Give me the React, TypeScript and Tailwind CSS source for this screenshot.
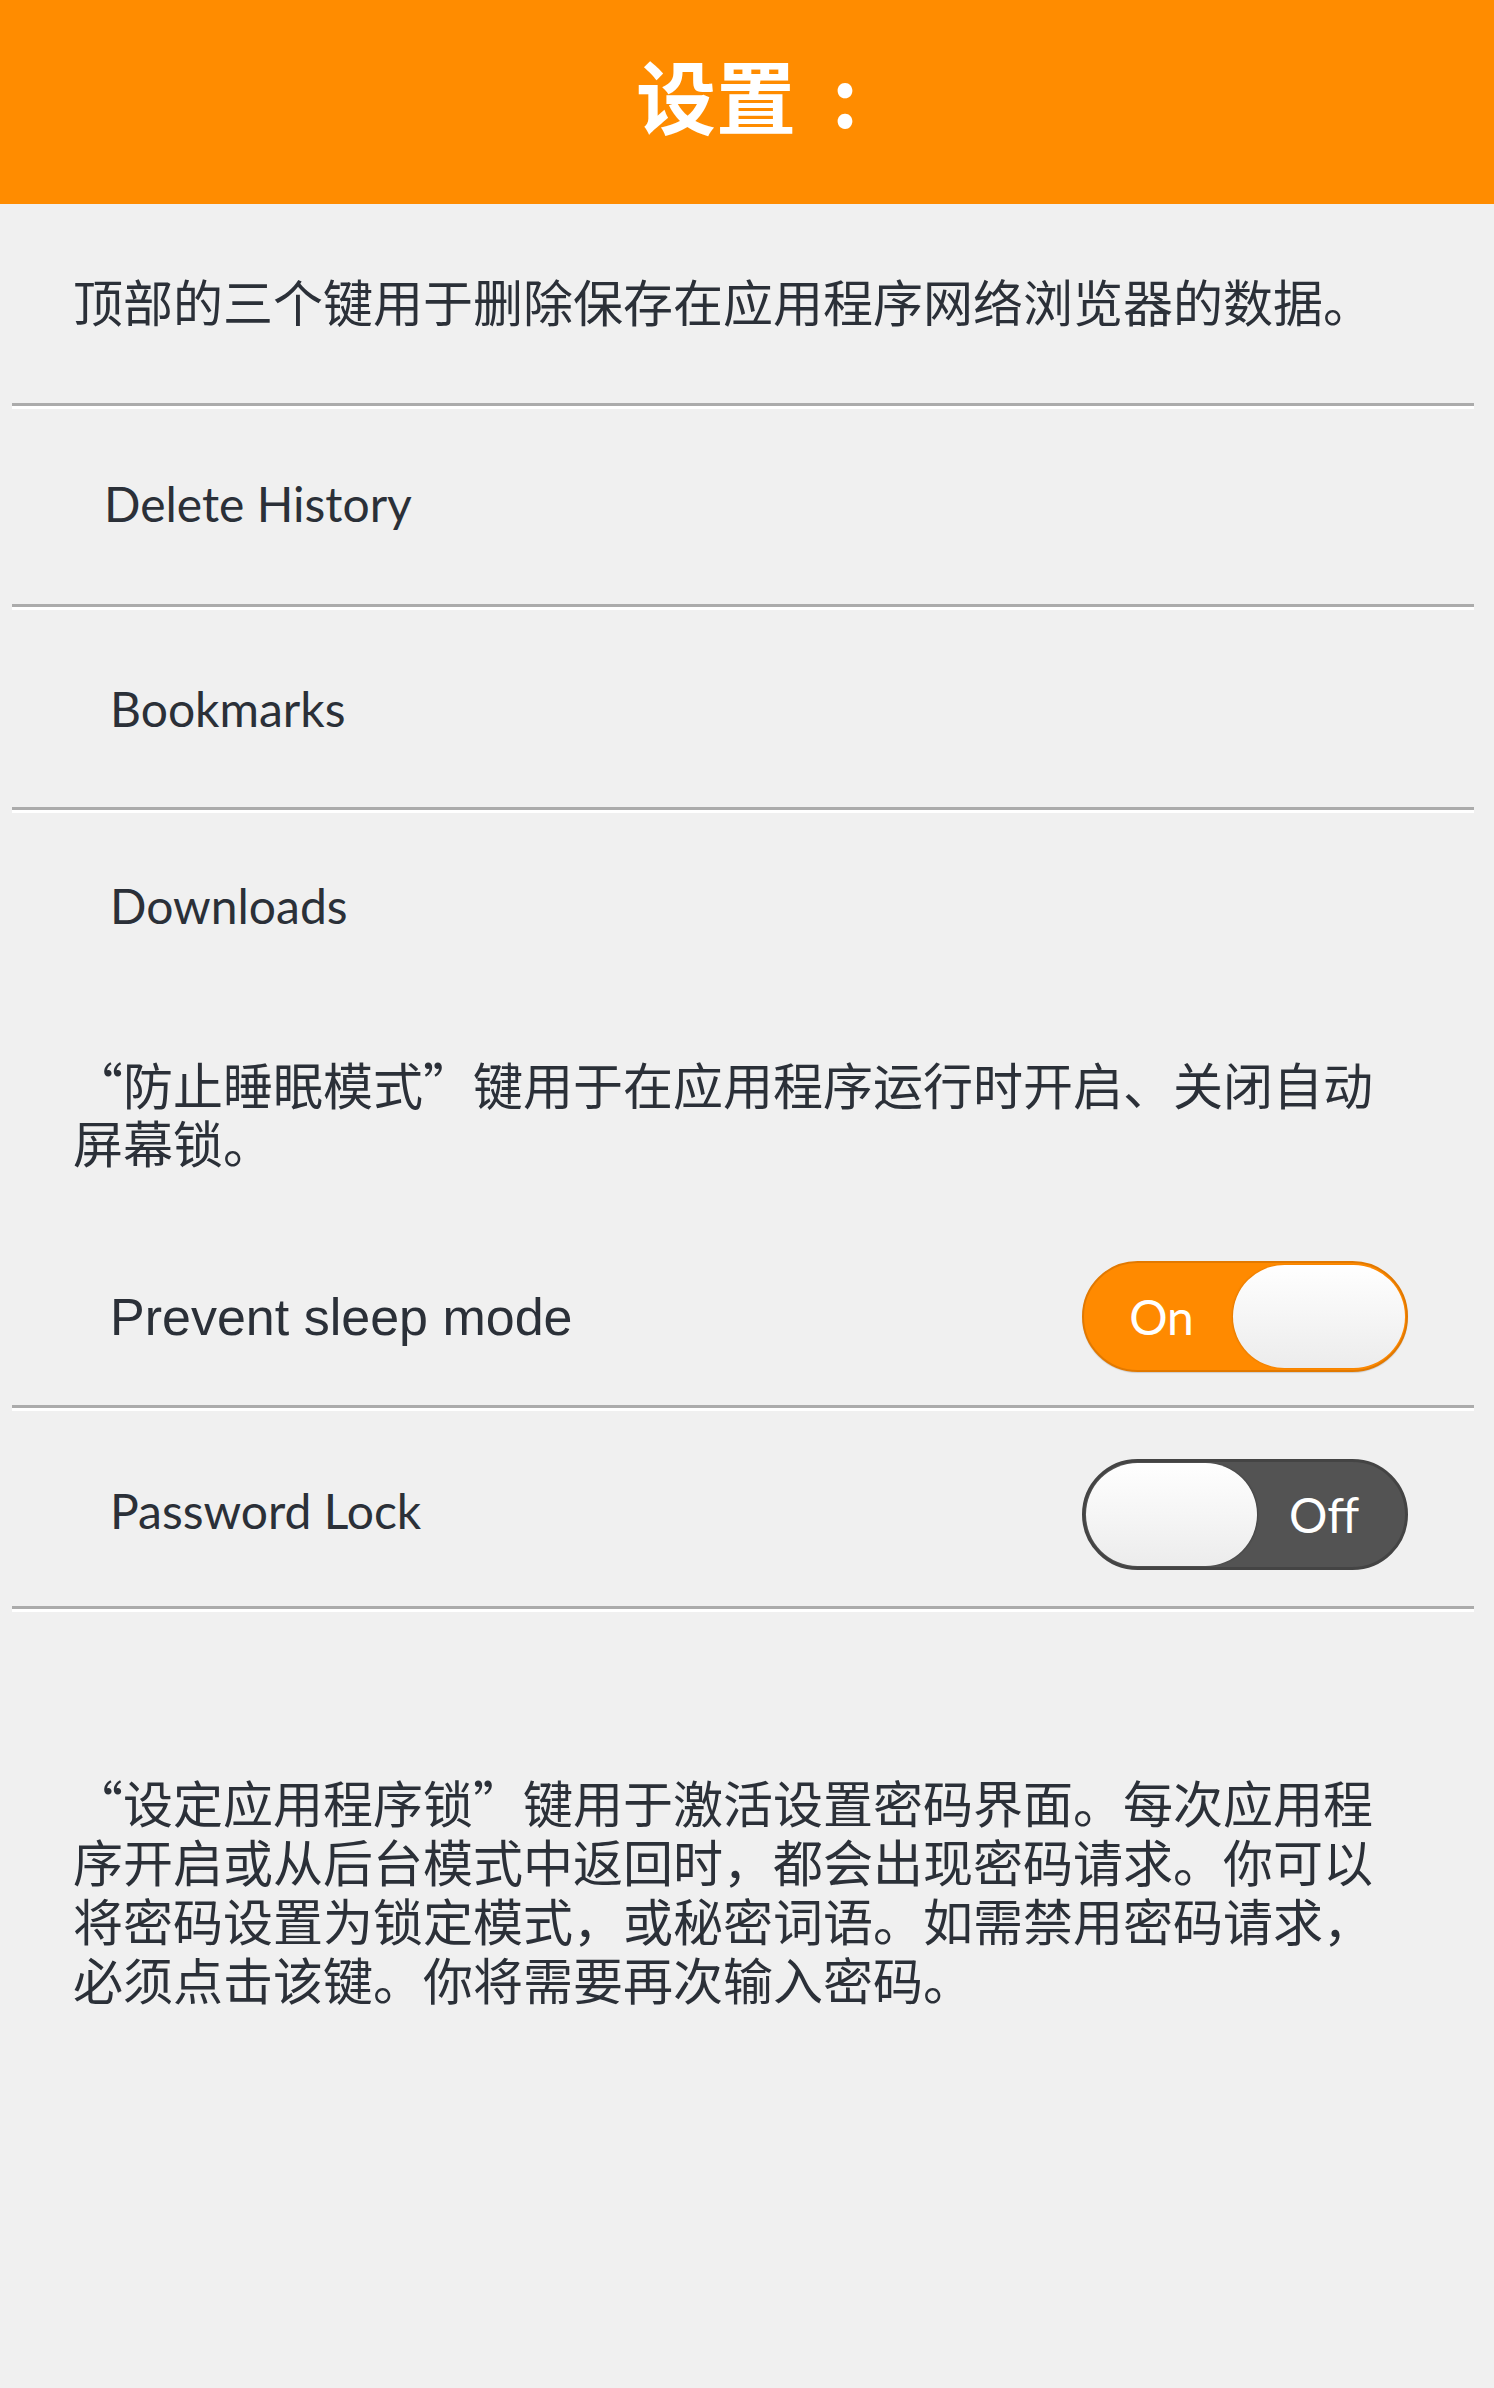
import React from "react";

const cjk = { fontFamily: '"Noto Sans CJK SC", "Noto Sans", sans-serif' };
const lato = { fontFamily: 'Lato, "Noto Sans", sans-serif' };

function Sep() {
  return (
    <div className="ml-[12px] mr-[20px]">
      <div className="h-[3px] bg-[#ababab]" />
      <div className="h-[3px] bg-white" />
    </div>
  );
}

function Toggle({ on }: { on: boolean }) {
  if (on) {
    return (
      <div className="flex h-[111px] w-[326px] items-center rounded-full border-2 border-[#e27900] bg-[#ff8a00] pr-[1px] shadow-[0_1px_1px_rgba(0,0,0,0.15)]">
        <div className="flex flex-1 items-center justify-center pl-[6px] text-[48px] leading-none text-white" style={lato}>
          On
        </div>
        <div className="h-[103px] w-[172px] rounded-full bg-gradient-to-b from-white to-[#ececec] shadow-[-1px_0_2px_rgba(0,0,0,0.12)]" />
      </div>
    );
  }
  return (
    <div className="flex h-[111px] w-[326px] items-center rounded-full border-[3px] border-[#444444] bg-[#535353] pl-[1px]">
      <div className="h-[103px] w-[171px] rounded-full bg-gradient-to-b from-white to-[#ececec] shadow-[1px_0_2px_rgba(0,0,0,0.2)]" />
      <div className="flex flex-1 items-center justify-center pr-[14px] text-[48px] leading-none text-white" style={lato}>
        Off
      </div>
    </div>
  );
}

export default function App() {
  return (
    <div className="min-h-[2388px] w-full bg-[#f0f0f0] text-[#2b3038]">
      <header className="flex h-[204px] items-center justify-center bg-[#ff8c00] pb-[18px]">
        <h1 className="flex items-center text-[80px] font-bold leading-none text-white" style={cjk}>
          <span>设置</span>
          <span className="ml-[36px]">:</span>
        </h1>
      </header>

      <div className="flex h-[199px] items-center px-[73px] pb-[8px]">
        <p lang="zh-CN" className="text-[50px] leading-[58px]" style={cjk}>
          顶部的三个键用于删除保存在应用程序网络浏览器的数据。
        </p>
      </div>
      <Sep />

      <div className="flex h-[195px] items-center pb-[5px] pl-[104px] text-[48px]" style={lato}>
        Delete History
      </div>
      <Sep />
      <div className="flex h-[197px] items-center pl-[110px] text-[48px]" style={lato}>
        Bookmarks
      </div>
      <Sep />
      <div className="flex h-[186px] items-center pl-[110px] text-[48px]" style={lato}>
        Downloads
      </div>

      <p lang="zh-CN" className="mt-[55px] px-[73px] text-[50px] leading-[58px]" style={cjk}>
        “防止睡眠模式”键用于在应用程序运行时开启、关闭自动
        <br />
        屏幕锁。
      </p>

      <div className="flex items-center justify-between pb-[33px] pl-[110px] pr-[86px] pt-[91px]">
        <span className="text-[52px]" style={{ fontFamily: '"Liberation Sans", Arial, sans-serif' }}>
          Prevent sleep mode
        </span>
        <Toggle on />
      </div>
      <Sep />
      <div className="flex items-center justify-between pb-[36px] pl-[110px] pr-[86px] pt-[48px]">
        <span className="mb-[8px] text-[48px]" style={lato}>
          Password Lock
        </span>
        <Toggle on={false} />
      </div>
      <Sep />

      <p lang="zh-CN" className="mt-[160px] px-[73px] text-[50px] leading-[59px]" style={cjk}>
        “设定应用程序锁”键用于激活设置密码界面。每次应用程
        <br />
        序开启或从后台模式中返回时，都会出现密码请求。你可以
        <br />
        将密码设置为锁定模式，或秘密词语。如需禁用密码请求，
        <br />
        必须点击该键。你将需要再次输入密码。
      </p>
    </div>
  );
}
